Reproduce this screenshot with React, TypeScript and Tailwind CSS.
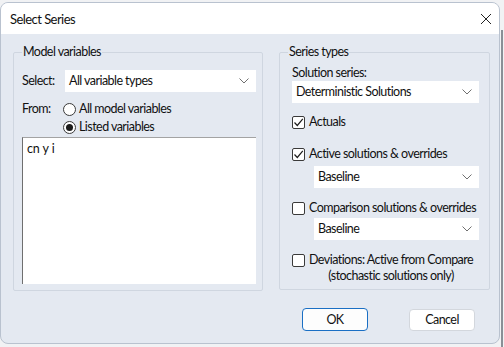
import React from 'react';

function Chevron() {
  return (
    <svg width="10" height="6" viewBox="0 0 10 6" className="shrink-0">
      <path d="M0.5 0.5 L5 5 L9.5 0.5" fill="none" stroke="#707070" strokeWidth="1" />
    </svg>
  );
}

function Dropdown({ value, className = '' }: { value: string; className?: string }) {
  return (
    <div className={`flex h-[22px] items-center justify-between bg-white pl-[4px] pr-[7px] ${className}`}>
      <span className="whitespace-nowrap">{value}</span>
      <Chevron />
    </div>
  );
}

function Checkbox({ checked }: { checked?: boolean }) {
  return (
    <div className="flex h-[13px] w-[13px] shrink-0 items-center justify-center rounded-[2px] border border-[#3a3a3a] bg-white">
      {checked && (
        <svg width="11" height="11" viewBox="0 0 11 11">
          <path d="M1.5 5.5 L4.3 8.5 L9.8 1.8" fill="none" stroke="#1f1f1f" strokeWidth="1.2" />
        </svg>
      )}
    </div>
  );
}

function Radio({ checked }: { checked?: boolean }) {
  return (
    <div className="flex h-[13px] w-[13px] shrink-0 items-center justify-center rounded-full border border-[#3a3a3a] bg-white">
      {checked && <div className="h-[7px] w-[7px] rounded-full bg-[#1b1b1b]" />}
    </div>
  );
}

export default function App() {
  return (
    <div className="relative h-[347px] w-[504px] overflow-hidden bg-[#f1f2f4] font-['Lato',sans-serif] text-[12.5px] leading-[16px] tracking-[-0.55px] text-[#111]">
      <span className="absolute left-[274px] top-[-14px] text-[14px] text-[#333]">Educational</span>
      <div className="absolute right-[1px] top-[30px] h-[317px] w-[2px] bg-[#8a8f96]" />

      <div className="relative mt-[2px] flex h-[342px] w-[500px] flex-col overflow-hidden rounded-[8px] border border-[#b9c2cf] bg-[#e4e9f1]">
        {/* title bar */}
        <div className="flex h-[31px] shrink-0 items-center justify-between bg-white pl-[9px] pr-[6px]">
          <span className="text-[13px]">Select Series</span>
          <svg width="12" height="12" viewBox="0 0 12 12" className="mr-[1px]">
            <path d="M1 1 L11 11 M11 1 L1 11" stroke="#222" strokeWidth="1" />
          </svg>
        </div>

        <div className="flex gap-[16px] pl-[12px] pt-[10px]">
          {/* Model variables */}
          <fieldset className="h-[247px] w-[250px] min-w-0 shrink-0 rounded-[2px] border border-[#cfd6e0] pl-[8px] pr-[6px]">
            <legend className="ml-[0px] px-[1px]">Model variables</legend>
            <div className="mt-[10px] flex items-center">
              <span className="w-[43px]">Select:</span>
              <Dropdown value="All variable types" className="flex-1" />
            </div>
            <div className="mt-[8px] flex">
              <span className="w-[41px] leading-[18px]">From:</span>
              <div className="flex flex-col">
                <div className="flex h-[18px] items-center gap-[3px]">
                  <Radio />
                  <span>All model variables</span>
                </div>
                <div className="flex h-[18px] items-center gap-[3px]">
                  <Radio checked />
                  <span>Listed variables</span>
                </div>
              </div>
            </div>
            <div className="mt-[1px] h-[147px] border-l border-t border-l-[#6f6f6f] border-t-[#a3a3a3] bg-white px-[4px] pt-[3px] tracking-[-0.1px]">
              cn y i
            </div>
          </fieldset>

          {/* Series types */}
          <fieldset className="h-[246px] w-[211px] min-w-0 shrink-0 rounded-[2px] border border-[#cfd6e0] pl-[12px] pr-[10px]">
            <legend className="ml-[-4px] px-[1px]">Series types</legend>
            <div className="mt-[5px]">Solution series:</div>
            <Dropdown value="Deterministic Solutions" />
            <div className="mt-[10px] flex h-[18px] items-center gap-[4px]">
              <Checkbox checked />
              <span>Actuals</span>
            </div>
            <div className="mt-[14px] flex h-[18px] items-center gap-[4px]">
              <Checkbox checked />
              <span className="whitespace-nowrap">Active solutions &amp; overrides</span>
            </div>
            <Dropdown value="Baseline" className="ml-[22px] mt-[3px]" />
            <div className="mt-[11px] flex h-[18px] items-center gap-[4px]">
              <Checkbox />
              <span className="whitespace-nowrap">Comparison solutions &amp; overrides</span>
            </div>
            <Dropdown value="Baseline" className="ml-[22px] mt-[1px]" />
            <div className="mt-[12px] flex items-start gap-[4px]">
              <div className="pt-[2px]">
                <Checkbox />
              </div>
              <span className="whitespace-nowrap text-center">
                Deviations: Active from Compare
                <br />
                (stochastic solutions only)
              </span>
            </div>
          </fieldset>
        </div>

        <div className="mt-[17px] flex justify-end gap-[41px] pr-[24px]">
          <button className="h-[23px] w-[66px] rounded-[4px] border border-[#1a6fc4] bg-[#fdfdfd]">OK</button>
          <button className="mt-[1px] h-[22px] w-[66px] rounded-[4px] border border-[#d3d7dd] bg-white">Cancel</button>
        </div>
      </div>
    </div>
  );
}
